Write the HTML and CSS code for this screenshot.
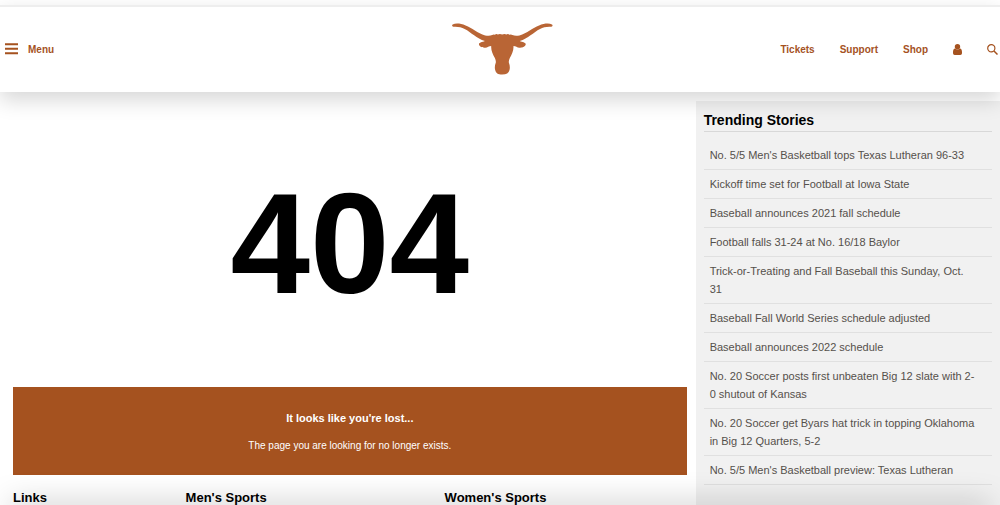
FILE: index.html
```html
<!DOCTYPE html>
<html lang="en">
<head>
  <meta charset="UTF-8" />
  <meta name="viewport" content="width=device-width, initial-scale=1.0" />
  <title>404 - Texas Longhorns</title>
  <link rel="stylesheet" href="styles.css">
</head>
<body>
  <header class="site-header">
    <button class="menu-button" type="button">
      <svg class="menu-icon" viewBox="0 0 13 12" aria-hidden="true">
        <path d="M0 1.3H13M0 5.8H13M0 10.3H13" stroke="currentColor" stroke-width="2" />
      </svg>
      Menu
    </button>
    <a class="logo" href="#" aria-label="Texas Longhorns home">
      <svg viewBox="36 40 304 156" aria-hidden="true">
        <path fill="currentColor" d="M38 44C47 40 62 41 77 47C96 54 113 70 136 77C143 79 151 79 157 76Q161 73 165 75Q169 72 174 74Q180 72 187 74Q194 72 200 74Q205 72 209 75Q214 73 218 76C224 79 232 79 239 77C262 70 279 54 298 47C313 41 328 40 337 44C340 47 339 50 335 51C322 50 311 52 301 58C281 68 265 87 240 94C248 98 257 98 258 103C258 110 248 115 239 114C232 114 228 109 221 109C222 123 216 134 210 145C207 151 206 157 208 162C210 168 211 174 209 181C207 190 200 195 187 195C174 195 168 190 166 181C164 174 165 168 167 162C169 157 168 151 165 145C159 134 153 123 154 109C147 109 143 114 136 114C127 115 117 110 117 103C118 98 127 98 135 94C110 87 94 68 74 58C64 52 53 50 40 51C36 50 35 47 38 44Z" />
      </svg>
    </a>
    <nav class="main-nav">
      <a href="#">Tickets</a>
      <a href="#">Support</a>
      <a href="#">Shop</a>
      <a href="#" aria-label="Account">
        <svg class="user-icon" viewBox="0 0 9 11" aria-hidden="true">
          <circle cx="4.5" cy="2.7" r="2.7" fill="currentColor" />
          <path d="M1.8 4.5C.5 4.9 0 6.4 0 8.6V9.3Q0 11 1.7 11H7.3Q9 11 9 9.3V8.6C9 6.4 8.5 4.9 7.2 4.5Q4.5 6.5 1.8 4.5Z" fill="currentColor" />
        </svg>
      </a>
      <button class="search-button" type="button" aria-label="Search">
        <svg class="search-icon" viewBox="0 0 11 11" aria-hidden="true">
          <circle cx="4.3" cy="4.3" r="3.6" fill="none" stroke="currentColor" stroke-width="1.2" />
          <path d="M7 7L10.5 10.5" stroke="currentColor" stroke-width="1.5" />
        </svg>
      </button>
    </nav>
  </header>

  <div class="page">
    <main class="content">
      <h1 class="error-code">404</h1>
      <section class="lost">
        <h2>It looks like you're lost...</h2>
        <p>The page you are looking for no longer exists.</p>
      </section>
      <div class="sitemap">
        <h3>Links</h3>
        <h3>Men's Sports</h3>
        <h3>Women's Sports</h3>
      </div>
    </main>

    <aside class="trending">
      <h2>Trending Stories</h2>
      <ul>
        <li><a href="#">No. 5/5 Men's Basketball tops Texas Lutheran 96-33</a></li>
        <li><a href="#">Kickoff time set for Football at Iowa State</a></li>
        <li><a href="#">Baseball announces 2021 fall schedule</a></li>
        <li><a href="#">Football falls 31-24 at No. 16/18 Baylor</a></li>
        <li><a href="#">Trick-or-Treating and Fall Baseball this Sunday, Oct. 31</a></li>
        <li><a href="#">Baseball Fall World Series schedule adjusted</a></li>
        <li><a href="#">Baseball announces 2022 schedule</a></li>
        <li><a href="#">No. 20 Soccer posts first unbeaten Big 12 slate with 2-0 shutout of Kansas</a></li>
        <li><a href="#">No. 20 Soccer get Byars hat trick in topping Oklahoma in Big 12 Quarters, 5-2</a></li>
        <li><a href="#">No. 5/5 Men's Basketball preview: Texas Lutheran</a></li>
      </ul>
    </aside>
  </div>

  <div class="bottom-shade"></div>
</body>
</html>
```

FILE: styles.css
```css
* {
  box-sizing: border-box;
}

body {
  display: flex;
  flex-direction: column;
  min-height: 100vh;
  margin: 0;
  padding-top: 5px;
  background: #fff;
  color: #000;
  font-family: "Liberation Sans", Arial, sans-serif;
  font-size: 10px;
}

h1, h2, h3, p, ul {
  margin: 0;
  padding: 0;
}

a {
  color: inherit;
  text-decoration: none;
}

button {
  padding: 0;
  border: none;
  background: none;
  color: inherit;
  font: inherit;
  cursor: pointer;
}

svg {
  display: block;
}

/* Header */
.site-header {
  position: relative;
  z-index: 2;
  display: grid;
  grid-template-columns: 1fr auto 1fr;
  align-items: center;
  padding: 16px 0 17px 5px;
  border-top: 2px solid #eee;
  background: #fff;
  box-shadow: 0 8px 20px rgba(0, 0, 0, 0.16);
  color: #a5521f;
  font-weight: bold;
}

.menu-button {
  display: flex;
  align-items: center;
  justify-self: start;
  gap: 10px;
}

.menu-icon {
  width: 13px;
  height: 12px;
}

.logo {
  color: #b96535;
}

.logo svg {
  width: 101px;
  height: 52px;
}

.main-nav {
  display: flex;
  align-items: center;
  justify-content: flex-end;
  gap: 25px;
  padding-right: 2px;
}

.user-icon {
  width: 9px;
  height: 11px;
}

.search-icon {
  width: 11px;
  height: 11px;
}

/* Page columns */
.page {
  display: grid;
  flex: 1;
  grid-template-columns: 16fr 7fr;
  padding-top: 9px;
}

.content {
  padding: 0 9px 0 13px;
}

.error-code {
  font-size: 143px;
  line-height: 286px;
  text-align: center;
}

.lost {
  padding: 22px 20px 20px;
  background: #a5521f;
  color: #fff;
  text-align: center;
}

.lost h2 {
  margin-bottom: 10px;
  font-size: 11px;
  line-height: 18px;
}

.lost p {
  line-height: 18px;
}

.sitemap {
  display: grid;
  grid-template-columns: 9fr 14fr 14fr;
  gap: 17px;
  padding-top: 15px;
}

.sitemap h3 {
  font-size: 13px;
  line-height: 15px;
}

/* Trending stories */
.trending {
  padding: 10px 8px 0;
  background: #f1f1f1;
}

.trending h2 {
  margin-bottom: 9px;
  padding-bottom: 2px;
  border-bottom: 1px solid #d8d8d8;
  font-size: 14px;
  line-height: 18px;
}

.trending ul {
  list-style: none;
}

.trending li {
  padding: 5px 14px 5px 6px;
  border-bottom: 1px solid #e0e0e0;
  color: #55504b;
  font-size: 11px;
  line-height: 18px;
}

/* Shadow cast from below the window edge */
.bottom-shade {
  position: fixed;
  right: 10px;
  bottom: -10px;
  left: 10px;
  z-index: 3;
  height: 10px;
  box-shadow: 0 0 30px rgba(0, 0, 0, 0.35);
}
```
